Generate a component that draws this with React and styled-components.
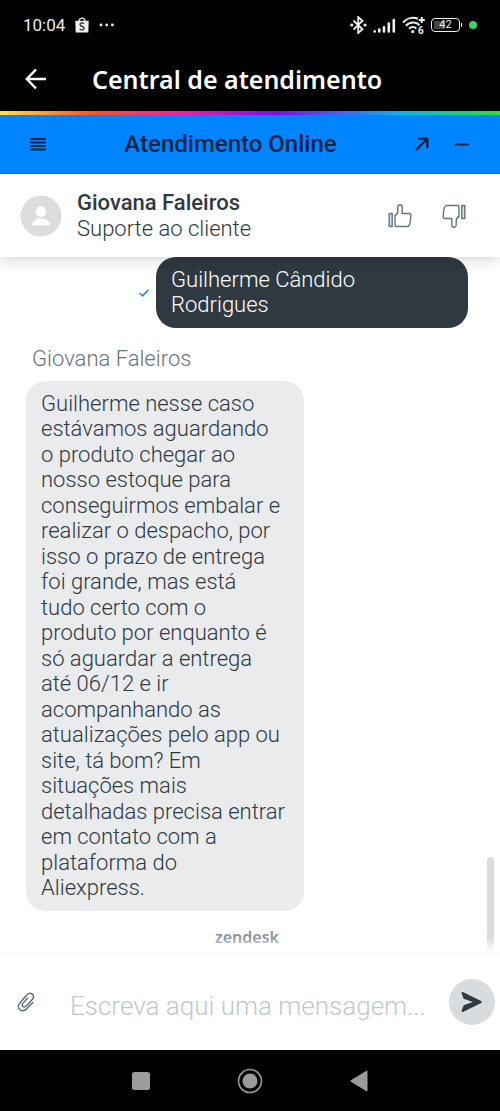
import React from 'react';
import styled, {createGlobalStyle} from 'styled-components';

const reply = [
    'Guilherme nesse caso',
    'estávamos aguardando',
    'o produto chegar ao',
    'nosso estoque para',
    'conseguirmos embalar e',
    'realizar o despacho, por',
    'isso o prazo de entrega',
    'foi grande, mas está',
    'tudo certo com o',
    'produto por enquanto é',
    'só aguardar a entrega',
    'até 06/12 e ir',
    'acompanhando as',
    'atualizações pelo app ou',
    'site, tá bom? Em',
    'situações mais',
    'detalhadas precisa entrar',
    'em contato com a',
    'plataforma do',
    'Aliexpress.',
];

const App = () =>{
    return(
        <Screen>
            <GlobalStyle />
            <StatusBar>
                <Clock>10:04</Clock>
                <BagIcon />
                <MoreIcon />
                <StatusIcons>
                    <BluetoothIcon />
                    <SignalIcon />
                    <WifiIcon />
                    <Battery><Charge />42<Tip /></Battery>
                    <PrivacyDot />
                </StatusIcons>
            </StatusBar>
            <AppBar>
                <IconButton aria-label="Voltar">
                    <svg width="24" height="24" viewBox="0 0 24 24" fill="none" stroke="#fff" strokeWidth="2.4">
                        <path d="M22 12H3.5M12 2.5L2.8 12l9.2 9.5" />
                    </svg>
                </IconButton>
                <h1>Central de atendimento</h1>
            </AppBar>
            <Rainbow />
            <ChatBar>
                <IconButton aria-label="Menu">
                    <svg width="16" height="14" viewBox="0 0 16 14" stroke="#052443" strokeWidth="2" strokeLinecap="round">
                        <path d="M1 2h14M1 5.5h14M1 9h14M1 12.500h14" />
                    </svg>
                </IconButton>
                <h2>Atendimento Online</h2>
                <IconButton aria-label="Abrir em nova janela">
                    <svg width="14" height="14" viewBox="0 0 14 14" fill="none" stroke="#052443" strokeWidth="2.4" strokeLinecap="round" strokeLinejoin="round">
                        <path d="M1.5 12.5L12 2M4 1.7h8.3v8.3" />
                    </svg>
                </IconButton>
                <IconButton aria-label="Minimizar">
                    <svg width="14" height="14" viewBox="0 0 14 14" stroke="#052443" strokeWidth="2" strokeLinecap="round">
                        <path d="M1 7.500h12" />
                    </svg>
                </IconButton>
            </ChatBar>
            <AgentBar>
                <AvatarIcon />
                <Agent>
                    <strong>Giovana Faleiros</strong>
                    <span>Suporte ao cliente</span>
                </Agent>
                <Rating>
                    <IconButton aria-label="Bom"><ThumbIcon /></IconButton>
                    <IconButton aria-label="Ruim"><ThumbIcon down /></IconButton>
                </Rating>
            </AgentBar>
            <Thread>
                <SentRow>
                    <svg width="10" height="8" viewBox="0 0 10 8" fill="none" stroke="#1f86ea" strokeWidth="1.6">
                        <path d="M0.7 4l2.8 2.8L9.3 1" />
                    </svg>
                    <Bubble $sent>
                        <span>Guilherme Cândido</span>
                        <span>Rodrigues</span>
                    </Bubble>
                </SentRow>
                <Sender>Giovana Faleiros</Sender>
                <Bubble>
                    {reply.map((line) => <span key={line}>{line} </span>)}
                </Bubble>
                <Brand>zendesk</Brand>
                <ScrollThumb />
                <Fade />
            </Thread>
            <Composer>
                <IconButton type="button" aria-label="Anexar arquivo"><ClipIcon /></IconButton>
                <input type="text" aria-label="Mensagem" placeholder="Escreva aqui uma mensagem..." />
                <SendButton type="button" aria-label="Enviar">
                    <svg width="22" height="22" viewBox="0 0 22 22" fill="#2f3941">
                        <path d="M1.8 1.1L20.2 10q1.2 1 0 2L1.8 20.900q-1.3.2-1.2-1.200L2.700 14.300 12 11 2.700 7.700.6 2.300Q.5.9 1.800 1.100z" />
                    </svg>
                </SendButton>
            </Composer>
            <NavBar>
                <IconButton aria-label="Recentes">
                    <svg width="18" height="18" fill="#9b9b9b"><rect width="18" height="18" rx="2.5" /></svg>
                </IconButton>
                <IconButton aria-label="Início">
                    <svg width="26" height="26" viewBox="0 0 26 26" fill="#9b9b9b">
                        <circle cx="13" cy="13" r="11.5" fill="none" stroke="#9b9b9b" strokeWidth="1.6" />
                        <circle cx="13" cy="13" r="7.5" />
                    </svg>
                </IconButton>
                <IconButton aria-label="Voltar">
                    <svg width="18" height="22" viewBox="0 0 18 22" fill="#9b9b9b">
                        <path d="M16.5.7q1-.5 1 .7v19.200q0 1.200-1 .7L.9 11.800q-1-.8 0-1.600z" />
                    </svg>
                </IconButton>
            </NavBar>
        </Screen>
    )
}

//icons
const BagIcon = () => (
    <svg width="14" height="16" viewBox="0 0 14 16">
        <path d="M4 4.500C4 0 10 0 10 4.500" fill="none" stroke="#eee" strokeWidth="1.3" />
        <path d="M.3 3.800h13.400l-.4 11.700H.7z" fill="#eee" />
        <path d="M9 6.600C7.600 5.400 4.900 5.700 5 7.600c.1 2 4.100 1.500 4.100 3.700 0 2-2.900 2.100-4.400.8" fill="none" stroke="#222" strokeWidth="1.2" />
    </svg>
)

const MoreIcon = () => (
    <svg width="16" height="4" viewBox="0 0 16 4" fill="#eee">
        <circle cx="2" cy="2" r="1.4" />
        <circle cx="7.700" cy="2" r="1.4" />
        <circle cx="13.400" cy="2" r="1.4" />
    </svg>
)

const BluetoothIcon = () => (
    <svg width="17" height="18" viewBox="0 0 17 18" fill="none" stroke="#eee" strokeWidth="1.8">
        <path d="M3.5 4.500l9 8.800L8.200 17V1l4.300 3.700-9 8.800" />
        <circle cx="1.700" cy="9" r=".7" />
        <circle cx="15" cy="9" r=".7" />
    </svg>
)

const SignalIcon = () => (
    <svg width="23" height="15" viewBox="0 0 23 15" stroke="#eee" strokeWidth="2.600" strokeLinecap="round">
        <path d="M1.700 13.200v.2M6.300 11.500v2M11 9.200v4.300M15.800 5.500v8M20.800 2v11.500" />
    </svg>
)

const WifiIcon = () => (
    <svg width="23" height="19" viewBox="0 0 23 19" fill="none" stroke="#eee" strokeWidth="2">
        <path d="M1 6.500C5 1.800 11 .8 16 2.800M3.800 9.700C8 5.400 14 5.400 17.500 9.200M7 12.800c2.300-2.300 5.500-2.200 7.200-.2" />
        <circle cx="10.700" cy="15.600" r="1.6" fill="#eee" stroke="none" />
        <path d="M19.800 1v6M16.800 4h6" />
        <text x="16" y="18" fill="#eee" stroke="none" fontSize="10" fontWeight="700" fontFamily="Roboto">6</text>
    </svg>
)

const AvatarIcon = () => (
    <svg width="42" height="42" viewBox="0 0 42 42">
        <circle cx="21" cy="21" r="20.5" fill="#ddd" />
        <circle cx="21" cy="16.500" r="5.2" fill="#fff" />
        <path d="M12 30.200c0-4.800 5-7 9-7s9 2.200 9 7z" fill="#fff" />
    </svg>
)

const ThumbIcon = ({down}) => (
    <svg width="24" height="24" viewBox="0 0 24 24" fill="none" stroke="#68737d" strokeWidth="1.4" strokeLinejoin="round">
        <g transform={down ? 'rotate(180 12 12)' : undefined}>
            <path d="M1.200 9.500h3v13h-3z" fill="#dfe2e5" />
            <path d="M7 11.500c2-.9 2.800-2.300 2.800-4.200V3c0-3 4.400-3 4.400 0v6.500h7.400c1 0 1.400.5 1.300 1.500-.2 3.500-.3 6-1.300 9.500-.4 1.500-1 2-2.300 2H8.500C7.300 22.500 7 22 7 21z" />
        </g>
    </svg>
)

const ClipIcon = () => (
    <svg width="18" height="20" viewBox="0 0 18 20" fill="none" stroke="#5f6a73" strokeWidth="1.4" strokeLinecap="round">
        <path d="M15.800 10.400l-6 6.400c-4.600 4.800-11.300-.6-7.200-5.500L10 2.800c3.600-3.700 8.600.5 5.500 4.400l-6.400 7c-2.300 2.200-5.200-.4-3.300-2.800l4.700-5.200" />
    </svg>
)

const GlobalStyle = createGlobalStyle`
    *{
        margin: 0;
        padding: 0;
        box-sizing: border-box;
    }
    body{
        background: #fff;
        font-family: Roboto, sans-serif;
        color: #2f3941;
    }
    svg{
        display: block;
        flex: none;
    }
`;

const Screen = styled.div`
    min-height: 100vh;
    display: flex;
    flex-direction: column;
`;

const IconButton = styled.button`
    display: flex;
    border: none;
    background: none;
    cursor: pointer;
`;

const StatusBar = styled.div`
    display: flex;
    align-items: center;
    gap: 10px;
    height: 50px;
    padding: 0 23px;
    background: #000;
    color: #eee;
`;

const Clock = styled.span`
    font-size: 17px;
`;

const StatusIcons = styled.div`
    display: flex;
    align-items: center;
    gap: 6px;
    margin-left: auto;
`;

const Battery = styled.div`
    position: relative;
    width: 29px;
    height: 14px;
    border: 1px solid #eee;
    border-radius: 4px;
    font-size: 11px;
    line-height: 12px;
    text-align: center;
    isolation: isolate;
`;

const Charge = styled.i`
    position: absolute;
    z-index: -1;
    left: 2px;
    top: 2px;
    bottom: 2px;
    width: 42%;
    background: #444;
`;

const Tip = styled.i`
    position: absolute;
    right: -3px;
    top: 4px;
    width: 1px;
    height: 4px;
    background: #eee;
`;

const PrivacyDot = styled.div`
    width: 8px;
    height: 8px;
    margin-left: 3px;
    border-radius: 50%;
    background: #3ad368;
`;

const AppBar = styled.header`
    display: flex;
    align-items: center;
    gap: 44px;
    height: 61px;
    padding: 0 24px 3px;
    background: #000;
    h1{
        color: #fff;
        font-family: 'Noto Sans', sans-serif;
        font-size: 25px;
        font-weight: 600;
    }
`;

const Rainbow = styled.div`
    height: 4px;
    background: linear-gradient(90deg, #ffe14d, #f9561f 18%, #f31fa0 36%, #7d0cf0 55%, #08b4ee 80%, #27e03c);
`;

const ChatBar = styled.div`
    display: flex;
    align-items: center;
    gap: 34px;
    height: 59px;
    padding: 0 31px 1px 30px;
    background: #0084ff;
    border-bottom: 1px solid #0a70d8;
    h2{
        flex: 1;
        color: #052443;
        font-size: 24px;
        font-weight: 500;
        text-align: center;
    }
    button:last-child{
        margin-left: -8px;
    }
`;

const AgentBar = styled.section`
    position: relative;
    z-index: 1;
    display: flex;
    align-items: center;
    gap: 15px;
    height: 83px;
    padding: 0 34px 0 20px;
    background: #fff;
    box-shadow: 0 0 16px rgba(0, 0, 0, 0.24);
    clip-path: inset(0 0 -24px 0);
`;

const Agent = styled.div`
    flex: 1;
    display: flex;
    flex-direction: column;
    font-size: 22px;
    line-height: 26px;
    strong{
        font-weight: 500;
    }
    span{
        font-weight: 300;
    }
`;

const Rating = styled.div`
    display: flex;
    gap: 30px;
`;

const Thread = styled.main`
    position: relative;
    flex: 1;
    padding: 0 32px 0 26px;
    font-size: 22px;
    line-height: 25px;
    font-weight: 300;
`;

const SentRow = styled.div`
    display: flex;
    align-items: center;
    justify-content: flex-end;
    gap: 7px;
`;

const Bubble = styled.p`
    width: 100%;
    max-width: ${(props) => (props.$sent ? '312px' : '278px')};
    padding: 10px 15px;
    border-radius: 20px;
    background: ${(props) => (props.$sent ? '#2f3941' : '#e9ebed')};
    color: ${(props) => (props.$sent ? '#fff' : '#2f3941')};
    span{
        display: block;
        white-space: nowrap;
    }
    span:nth-child(even){
        line-height: 26px;
    }
`;

const Sender = styled.p`
    padding: 18px 6px 10px;
    color: #68737d;
`;

const Brand = styled.p`
    padding: 16px 0 5px;
    color: #87929a;
    font-family: 'Noto Sans', sans-serif;
    font-size: 16px;
    line-height: 20px;
    font-weight: 600;
    text-align: center;
`;

const ScrollThumb = styled.div`
    position: absolute;
    right: 6px;
    bottom: 1px;
    width: 7px;
    height: 95px;
    border-radius: 4px;
    background: #d8dcde;
`;

//messages fade out above the composer
const Fade = styled.div`
    position: absolute;
    left: 0;
    right: 0;
    bottom: 0;
    height: 16px;
    background: linear-gradient(rgba(255, 255, 255, 0), #fff);
`;

const Composer = styled.form`
    display: flex;
    align-items: center;
    gap: 35px;
    height: 97px;
    padding: 0 5px 0 17px;
    border-top: 1px solid #f5f5f6;
    input{
        flex: 1;
        min-width: 0;
        padding-top: 8px;
        border: none;
        outline: none;
        background: none;
        color: #2f3941;
        font-family: inherit;
        font-size: 26px;
        font-weight: 300;
    }
    input::placeholder{
        color: #c2c8cc;
        opacity: 1;
    }
`;

const SendButton = styled(IconButton)`
    align-items: center;
    justify-content: center;
    width: 46px;
    height: 46px;
    margin-left: -35px;
    border-radius: 50%;
    background: #d8dcde;
`;

const NavBar = styled.nav`
    display: flex;
    align-items: center;
    justify-content: center;
    gap: 87px;
    height: 61px;
    background: #000;
`;

export default App;
